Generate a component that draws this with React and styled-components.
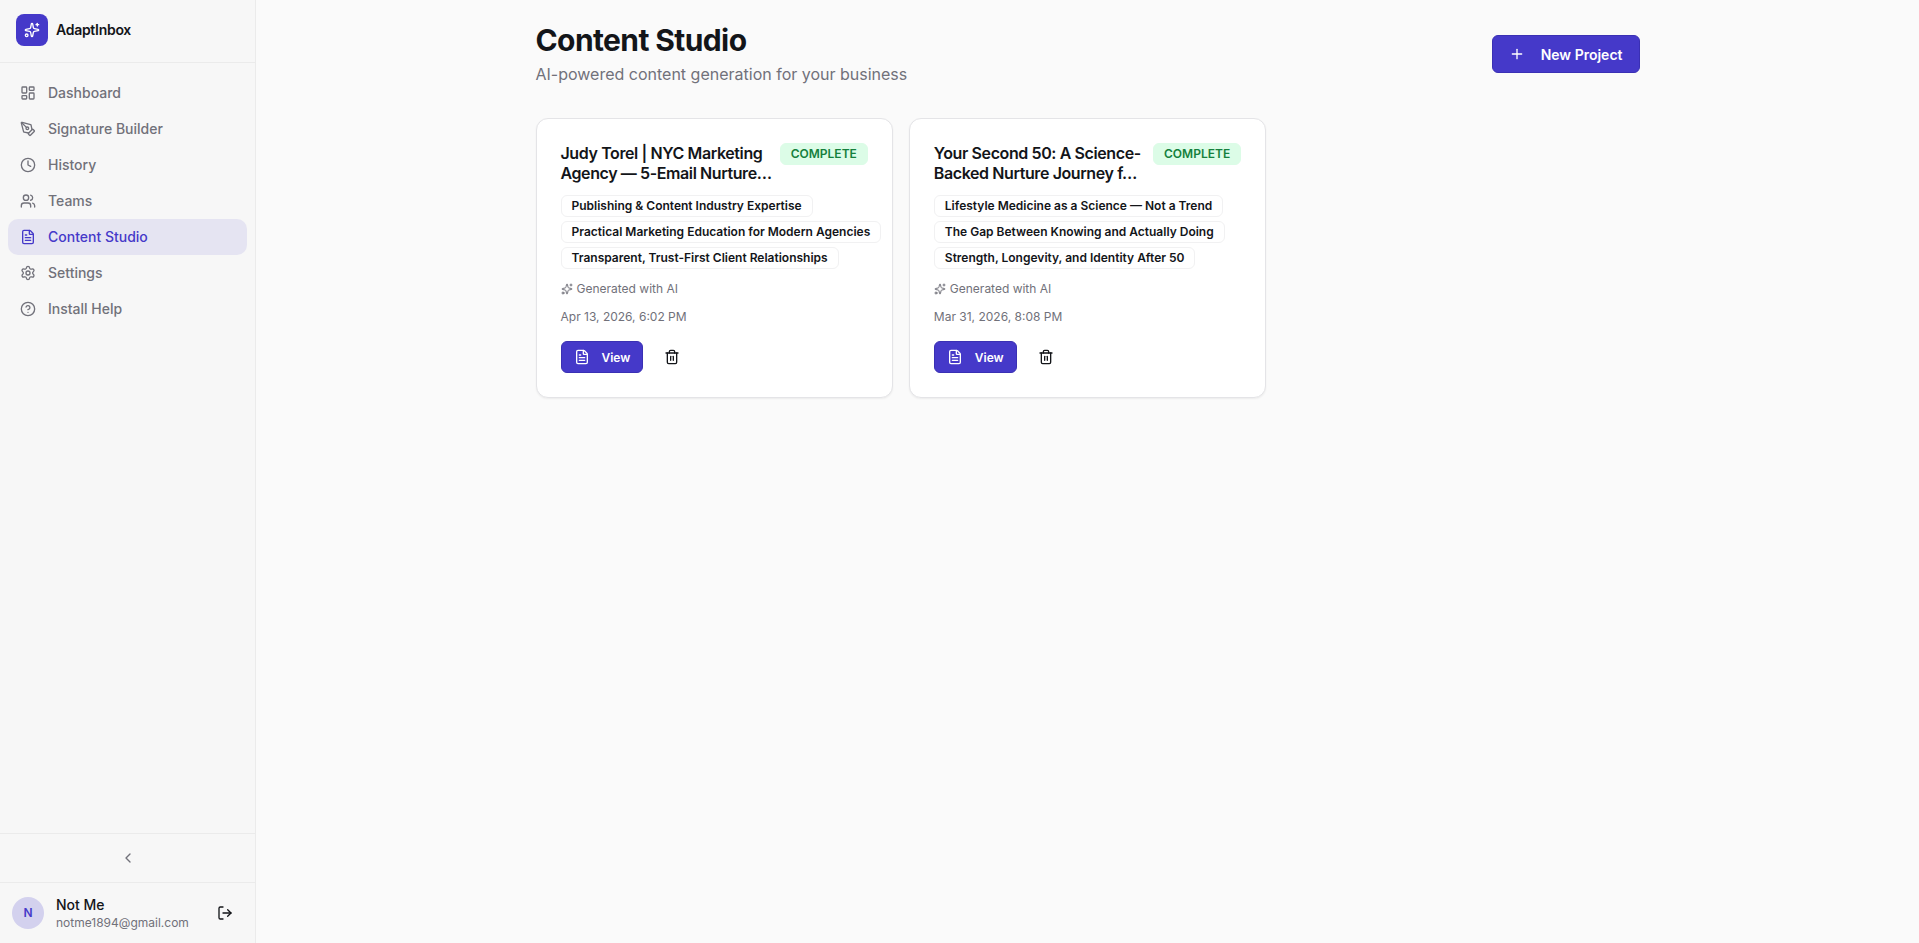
import React from 'react';
import styled, { createGlobalStyle } from 'styled-components';
import {
  ChevronLeft,
  CircleHelp,
  Clock,
  FileText,
  LayoutDashboard,
  LogOut,
  PenTool,
  Plus,
  Settings,
  Sparkles,
  Trash2,
  Users,
} from 'lucide-react';

const GlobalStyle = createGlobalStyle`
  * {
    box-sizing: border-box;
  }

  body {
    margin: 0;
    background: #fafafa;
    color: #131519;
    font-family: Inter, 'Liberation Sans', sans-serif;
    font-size: 14px;
    line-height: 20px;
  }

  h1, h2, p, ul {
    margin: 0;
    padding: 0;
  }

  button {
    font-family: inherit;
    color: inherit;
    cursor: pointer;
  }
`;

const Layout = styled.div`
  display: flex;
  min-height: 100vh;
`;

const Sidebar = styled.aside`
  position: sticky;
  top: 0;
  display: flex;
  flex-direction: column;
  flex-shrink: 0;
  width: 256px;
  height: 100vh;
  background: #f7f7f7;
  border-right: 1px solid #ebebeb;
`;

const Brand = styled.div`
  display: flex;
  align-items: center;
  gap: 8px;
  padding: 14px 16px 16px;
  border-bottom: 1px solid #ebebeb;
  font-weight: 600;
  letter-spacing: -0.02em;
`;

const BrandLogo = styled.span`
  display: flex;
  align-items: center;
  justify-content: center;
  width: 32px;
  height: 32px;
  border-radius: 8px;
  background: #4539c9;
  color: #fff;
`;

const Nav = styled.nav`
  display: flex;
  flex: 1;
  flex-direction: column;
  padding: 12px 8px;
`;

const NavLink = styled.a`
  display: flex;
  align-items: center;
  gap: 12px;
  height: 36px;
  padding: 0 12px;
  border-radius: 10px;
  background: ${props => (props.$active ? '#e5e4f2' : 'transparent')};
  color: ${props => (props.$active ? '#4539c9' : '#71717a')};
  font-weight: 500;
  text-decoration: none;
`;

const CollapseRow = styled.div`
  padding: 8px;
  border-top: 1px solid #ebebeb;
`;

const CollapseButton = styled.button`
  display: flex;
  align-items: center;
  justify-content: center;
  width: 100%;
  height: 32px;
  border: 0;
  background: none;
  color: #71717a;
`;

const UserRow = styled.div`
  display: flex;
  align-items: center;
  gap: 12px;
  padding: 12px;
  border-top: 1px solid #ebebeb;
`;

const Avatar = styled.span`
  display: flex;
  align-items: center;
  justify-content: center;
  width: 32px;
  height: 32px;
  border-radius: 50%;
  background: #d3d1ee;
  color: #4539c9;
  font-size: 12px;
  font-weight: 600;
`;

const UserInfo = styled.div`
  flex: 1;
  min-width: 0;
`;

const UserName = styled.p`
  font-weight: 500;
`;

const UserEmail = styled.p`
  color: #71717a;
  font-size: 12px;
  line-height: 16px;
`;

const IconButton = styled.button`
  display: flex;
  align-items: center;
  justify-content: center;
  width: ${props => props.$width};
  height: ${props => props.$height};
  padding: 0;
  border: 0;
  background: none;
`;

const Main = styled.main`
  flex: 1;
  min-width: 0;
`;

const Container = styled.div`
  max-width: 1152px;
  margin: 0 auto;
  padding: 22px 24px 24px;
`;

const PageHeader = styled.header`
  display: flex;
  align-items: center;
  justify-content: space-between;
  margin-bottom: 32px;
`;

const PageTitle = styled.h1`
  font-size: 30px;
  font-weight: 700;
  line-height: 36px;
  letter-spacing: -0.02em;
`;

const PageSubtitle = styled.p`
  margin-top: 4px;
  color: #71717a;
  font-size: 16px;
  line-height: 24px;
`;

const PrimaryButton = styled.button`
  display: inline-flex;
  align-items: center;
  gap: ${props => (props.$small ? '12px' : '16px')};
  height: ${props => (props.$small ? '32px' : '38px')};
  padding: 0 ${props => (props.$small ? '12px' : '16px')};
  border: 1px solid #3a30b4;
  border-radius: 6px;
  background: #4539c9;
  color: #fff;
  font-size: ${props => (props.$small ? '12px' : '14px')};
  font-weight: 600;
`;

const ProjectGrid = styled.div`
  display: grid;
  grid-template-columns: repeat(3, minmax(0, 1fr));
  gap: 16px;
`;

const Card = styled.article`
  padding: 24px;
  border: 1px solid #e4e4e7;
  border-radius: 12px;
  background: #fff;
  box-shadow: 0 1px 2px rgba(0, 0, 0, 0.06);
`;

const CardHeader = styled.div`
  display: flex;
  align-items: flex-start;
  justify-content: space-between;
  gap: 4px;
`;

const CardTitle = styled.h2`
  font-size: 16px;
  font-weight: 600;
  line-height: 20px;
  letter-spacing: -0.025em;
`;

const Badge = styled.span`
  flex-shrink: 0;
  padding: 2px 10px;
  border: 1px solid ${props => (props.$status ? '#dcfce7' : '#f1f1f2')};
  border-radius: 6px;
  background: ${props => (props.$status ? '#dcfce7' : 'transparent')};
  color: ${props => (props.$status ? '#15803d' : 'inherit')};
  font-size: 12px;
  font-weight: 600;
  line-height: 16px;
  white-space: nowrap;
`;

const TagList = styled.div`
  display: flex;
  flex-direction: column;
  align-items: flex-start;
  gap: 4px;
  margin-top: 12px;
`;

const Meta = styled.p`
  display: flex;
  align-items: center;
  gap: 4px;
  margin-top: 12px;
  color: #71717a;
  font-size: 12px;
  line-height: 16px;
`;

const CardActions = styled.div`
  display: flex;
  gap: 8px;
  margin-top: 16px;
`;

const navItems = [
  { label: 'Dashboard', icon: LayoutDashboard },
  { label: 'Signature Builder', icon: PenTool },
  { label: 'History', icon: Clock },
  { label: 'Teams', icon: Users },
  { label: 'Content Studio', icon: FileText, active: true },
  { label: 'Settings', icon: Settings },
  { label: 'Install Help', icon: CircleHelp },
];

const projects = [
  {
    id: 1,
    title: 'Judy Torel | NYC Marketing Agency — 5-Email Nurture…',
    status: 'COMPLETE',
    tags: [
      'Publishing & Content Industry Expertise',
      'Practical Marketing Education for Modern Agencies',
      'Transparent, Trust-First Client Relationships',
    ],
    date: 'Apr 13, 2026, 6:02 PM',
  },
  {
    id: 2,
    title: 'Your Second 50: A Science-Backed Nurture Journey f…',
    status: 'COMPLETE',
    tags: [
      'Lifestyle Medicine as a Science — Not a Trend',
      'The Gap Between Knowing and Actually Doing',
      'Strength, Longevity, and Identity After 50',
    ],
    date: 'Mar 31, 2026, 8:08 PM',
  },
];

const ProjectCard = props => {
  const { title, status, tags, date } = props.project;
  return (
    <Card>
      <CardHeader>
        <CardTitle>{title}</CardTitle>
        <Badge $status>{status}</Badge>
      </CardHeader>
      <TagList>
        {tags.map(tag => (
          <Badge key={tag}>{tag}</Badge>
        ))}
      </TagList>
      <Meta>
        <Sparkles size={12} />
        Generated with AI
      </Meta>
      <Meta>{date}</Meta>
      <CardActions>
        <PrimaryButton $small type="button">
          <FileText size={16} />
          View
        </PrimaryButton>
        <IconButton $width="42px" $height="32px" type="button" aria-label="Delete project">
          <Trash2 size={16} />
        </IconButton>
      </CardActions>
    </Card>
  );
};

const App = () => {
  return (
    <Layout>
      <GlobalStyle />
      <Sidebar>
        <Brand>
          <BrandLogo>
            <Sparkles size={16} />
          </BrandLogo>
          AdaptInbox
        </Brand>
        <Nav>
          {navItems.map(({ label, icon: Icon, active }) => (
            <NavLink key={label} href="#" $active={active}>
              <Icon size={16} />
              {label}
            </NavLink>
          ))}
        </Nav>
        <CollapseRow>
          <CollapseButton type="button" aria-label="Collapse sidebar">
            <ChevronLeft size={16} />
          </CollapseButton>
        </CollapseRow>
        <UserRow>
          <Avatar>N</Avatar>
          <UserInfo>
            <UserName>Not Me</UserName>
            <UserEmail>notme1894@gmail.com</UserEmail>
          </UserInfo>
          <IconButton $width="36px" $height="36px" type="button" aria-label="Log out">
            <LogOut size={16} />
          </IconButton>
        </UserRow>
      </Sidebar>
      <Main>
        <Container>
          <PageHeader>
            <div>
              <PageTitle>Content Studio</PageTitle>
              <PageSubtitle>AI-powered content generation for your business</PageSubtitle>
            </div>
            <PrimaryButton type="button">
              <Plus size={16} />
              New Project
            </PrimaryButton>
          </PageHeader>
          <ProjectGrid>
            {projects.map(project => (
              <ProjectCard key={project.id} project={project} />
            ))}
          </ProjectGrid>
        </Container>
      </Main>
    </Layout>
  );
};

export default App;
